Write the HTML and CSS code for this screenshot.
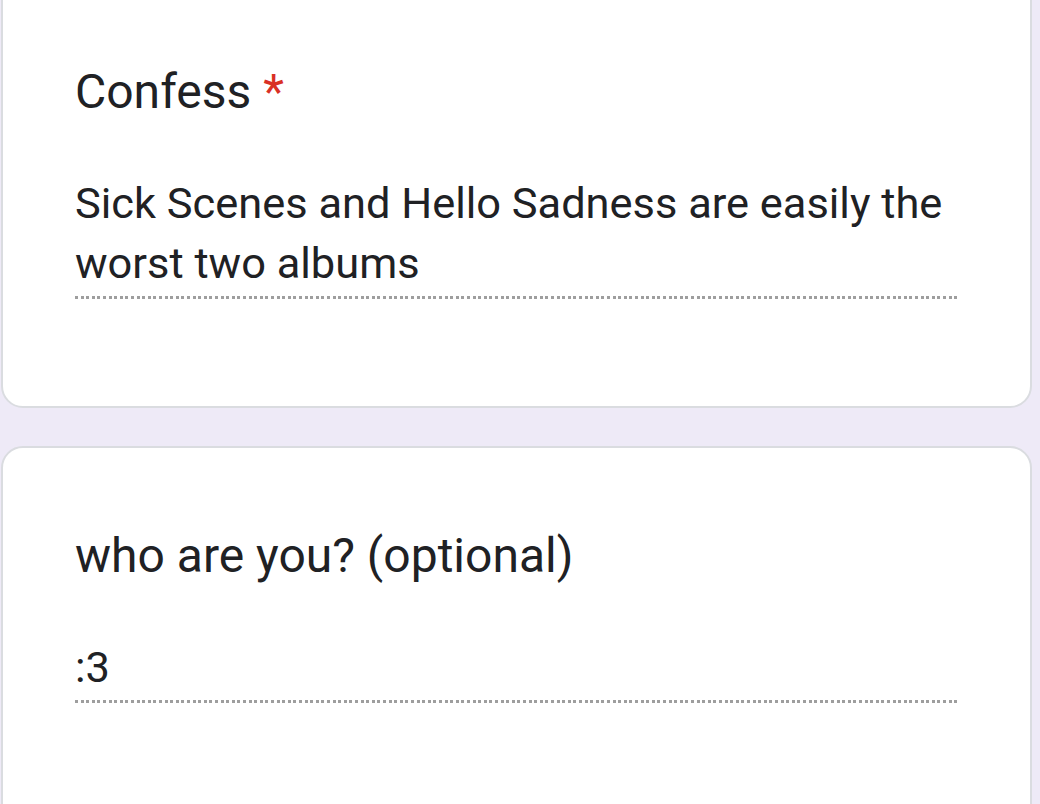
FILE: index.html
```html
<!DOCTYPE html>
<html>
<head>
<meta charset="utf-8">
<link rel="stylesheet" href="styles.css">
</head>
<body>
<div class="page">
  <section class="card card-first">
    <div class="question">Confess <span class="req">*</span></div>
    <div class="answer">Sick Scenes and Hello Sadness are easily the worst two albums</div>
  </section>
  <section class="card">
    <div class="question">who are you? (optional)</div>
    <div class="answer">:3</div>
  </section>
</div>
</body>
</html>
```
FILE: styles.css
```css
html, body {
  margin: 0;
  padding: 0;
  background: #eeeaf7;
  overflow: hidden;
}
body {
  font-family: Roboto, "Noto Sans", sans-serif;
  color: #202124;
}
.page {
  display: flex;
  flex-direction: column;
  gap: 38px;
  padding: 0 8px 0 1px;
  margin-top: -40px;
}
.card {
  background: #fff;
  border: 2px solid #dadce0;
  border-radius: 22px;
  padding: 78px 72px 0 72px;
  height: 440px;
  box-sizing: border-box;
}
.card-first {
  padding-top: 100px;
  height: 448px;
}
.question {
  font-size: 48px;
  line-height: 60px;
}
.req {
  color: #d93025;
}
.answer {
  margin-top: 52px;
  font-size: 43.4px;
  line-height: 60px;
  padding-bottom: 5px;
  background-image: repeating-linear-gradient(to right, #9e9e9e 0 3px, transparent 3px 5.6px);
  background-size: 100% 3px;
  background-repeat: no-repeat;
  background-position: left bottom;
}
```
